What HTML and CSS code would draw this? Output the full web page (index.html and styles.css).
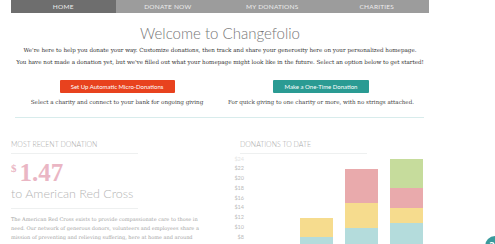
FILE: index.html
```html
<!DOCTYPE html>
<html>
  <head>
    <meta charset="UTF-8">
    <meta name="viewport" content="width=device-width,initial-scale=1">
    <title>Changefolio</title>
    <link rel="stylesheet" href="styles.css">
  </head>
  <body>
    <div class="page">
      <!-- top navigation -->
      <div class="nav">
        <a class="tab active" href="#">Home</a>
        <a class="tab" href="#">Donate Now</a>
        <a class="tab" href="#">My Donations</a>
        <a class="tab" href="#">Charities</a>
      </div>

      <h1 class="welcome">Welcome to Changefolio</h1>
      <p class="intro">We're here to help you donate your way. Customize donations, then track and share your generosity here on your personalized homepage.</p>
      <p class="intro">You have not made a donation yet, but we've filled out what your homepage might look like in the future. Select an option below to get started!</p>

      <div class="options">
        <div class="option">
          <button class="btn btn-red">Set Up Automatic Micro-Donations</button>
          <p class="caption">Select a charity and connect to your bank for ongoing giving</p>
        </div>
        <div class="option">
          <button class="btn btn-teal">Make a One-Time Donation</button>
          <p class="caption">For quick giving to one charity or more, with no strings attached.</p>
        </div>
      </div>

      <hr class="divider">

      <div class="dashboard">
        <div class="recent">
          <h3 class="section-title">Most Recent Donation</h3>
          <div class="amount"><span class="dollar">$</span>1.47</div>
          <div class="charity">to American Red Cross</div>
          <p class="about">The American Red Cross exists to provide compassionate care to those in need. Our network of generous donors, volunteers and employees share a mission of preventing and relieving suffering, here at home and around the world.</p>
        </div>

        <div class="totals">
          <h3 class="section-title">Donations to Date</h3>
          <div class="chart">
            <div class="axis">
              <span>$24</span><span>$22</span><span>$20</span><span>$18</span><span>$16</span><span>$14</span><span>$12</span><span>$10</span><span>$8</span><span>$6</span><span>$4</span><span>$2</span><span>$0</span>
            </div>
            <div class="bars">
              <div class="bar"></div>
              <div class="bar">
                <div class="seg yellow" style="height:19.6px"></div>
                <div class="seg teal" style="height:39.2px"></div>
              </div>
              <div class="bar">
                <div class="seg pink" style="height:34.3px"></div>
                <div class="seg yellow" style="height:24.5px"></div>
                <div class="seg teal" style="height:49px"></div>
              </div>
              <div class="bar">
                <div class="seg green" style="height:29.4px"></div>
                <div class="seg pink" style="height:19.6px"></div>
                <div class="seg yellow" style="height:14.7px"></div>
                <div class="seg teal" style="height:53.9px"></div>
              </div>
            </div>
          </div>
        </div>
      </div>
    </div>

    <a class="help" href="#">?</a>
  </body>
</html>
```

FILE: styles.css
```css
body {
  margin: 0;
  background: #fff;
  font-family: "DejaVu Serif", serif;
  color: #444;
}

.page {
  width: 418px;
  margin-left: 11px;
}

/* Navigation bar */
.nav {
  display: flex;
  height: 13px;
  background-color: #9c9c9c;
}

.tab {
  flex: 1;
  text-align: center;
  line-height: 13px;
  font-family: Lato, sans-serif;
  font-size: 6.5px;
  text-transform: uppercase;
  letter-spacing: 0.2px;
  color: #ececec;
  text-decoration: none;
}

.tab.active {
  background-color: #6e6e6e;
}

.welcome {
  margin: 10px 0 2px 0;
  text-align: center;
  font-family: Lato, sans-serif;
  font-weight: 300;
  font-size: 15px;
  line-height: 20px;
  color: #777;
}

.intro {
  margin: 0;
  text-align: center;
  font-size: 5.6px;
  line-height: 11.5px;
  color: #333;
  white-space: nowrap;
}

/* Two call-to-action columns */
.options {
  display: flex;
  margin-top: 11.5px;
}

.option {
  flex: 1;
  display: flex;
  flex-direction: column;
  align-items: center;
}

.option:first-child {
  padding-left: 4px;
}

.option:last-child {
  padding-right: 6px;
}

.btn {
  height: 13px;
  padding: 0;
  border: none;
  border-radius: 1px;
  font-family: Lato, sans-serif;
  font-size: 6px;
  color: #fff;
}

.btn-red {
  width: 115px;
  background-color: #e8421e;
}

.btn-teal {
  width: 96px;
  background-color: #2a9b93;
}

.caption {
  margin: 4.5px 0 0 0;
  font-size: 5.6px;
  line-height: 11px;
  color: #444;
  white-space: nowrap;
}

.divider {
  margin: 8.5px 0 0 4px;
  width: 409px;
  border: none;
  border-top: 1px solid #d8ecec;
}

/* Lower dashboard */
.dashboard {
  display: flex;
  margin-top: 21px;
}

.recent {
  width: 190px;
}

.section-title {
  margin: 0;
  width: 127px;
  padding-bottom: 4px;
  border-bottom: 1px solid #eef0f0;
  font-family: Lato, sans-serif;
  font-weight: 300;
  font-size: 7px;
  line-height: 10px;
  text-transform: uppercase;
  color: #a8a8a8;
}

.amount {
  margin-top: 2px;
  font-family: "Liberation Serif", serif;
  font-weight: bold;
  font-size: 25px;
  line-height: 24px;
  color: #eab6c4;
}

.dollar {
  font-size: 11px;
  vertical-align: 9px;
  margin-right: 3px;
}

.charity {
  width: 127px;
  padding: 0 0 5px 0;
  border-bottom: 1px solid #eef0f0;
  font-family: Lato, sans-serif;
  font-weight: 300;
  font-size: 12.5px;
  line-height: 18px;
  color: #b5b5b5;
  white-space: nowrap;
}

.about {
  margin: 6px 0 0 0;
  font-size: 5px;
  line-height: 9.3px;
  color: #a5a5a5;
}

.totals {
  margin-left: 39px;
}

/* Stacked bar chart */
.chart {
  display: flex;
  margin-top: 1px;
  margin-left: -10px;
}

.axis {
  display: flex;
  flex-direction: column;
  width: 14px;
  font-family: Lato, sans-serif;
  font-size: 5.5px;
  color: #bbb;
  text-align: right;
}

.axis span {
  height: 9.8px;
  line-height: 9.8px;
}

.axis span:first-child {
  color: #e4e4e4;
}

.bars {
  display: flex;
  align-items: flex-end;
  gap: 12px;
  margin-left: 11px;
  height: 122px;
  padding-bottom: 5px;
}

.bar {
  width: 33px;
  display: flex;
  flex-direction: column;
}

.seg.teal   { background-color: #b4dcdc; }
.seg.yellow { background-color: #f6dc8e; }
.seg.pink   { background-color: #e9aaac; }
.seg.green  { background-color: #c6dc9c; }

/* Floating help button */
.help {
  position: fixed;
  left: 485px;
  top: 236px;
  width: 20px;
  height: 20px;
  border-radius: 50%;
  background-color: #3a9a9c;
  color: #fff;
  font-family: Lato, sans-serif;
  font-weight: bold;
  font-size: 12px;
  line-height: 20px;
  text-indent: -6px;
  text-align: center;
  text-decoration: none;
}
```
